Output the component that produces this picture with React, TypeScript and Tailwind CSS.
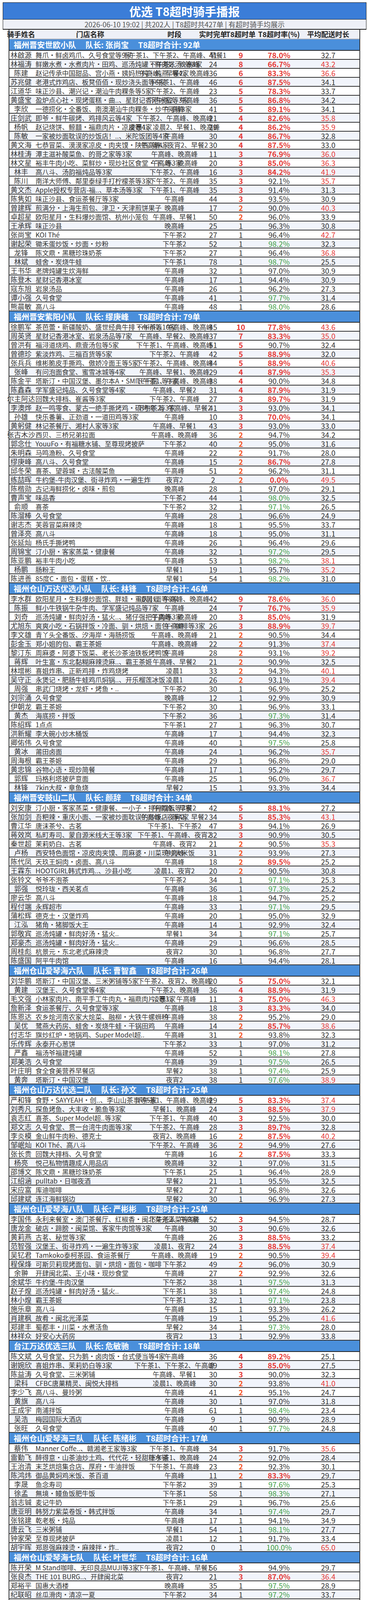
import React from 'react';

type Group = { team: string; leader: string; total: number; rows: string };

// name|store|time|done|late|rate|avg
const groups: Group[] = [
  {
    team: '福州晋安世欧小队', leader: '张尚宝', total: 92, rows: `
林啟源|舞爪·鲜卤鸡爪、久号食堂等9家|下午茶1、下午茶2、午高峰、早餐1|41|9|78.0|32.7
林福涛|鲜嫩水煮·水煮肉片·田鸡、巡汤炖罐·鲜肉好汤..等8家|下午茶2、晚高峰|24|8|66.7|43.2
陈建|赵记传承中国甜品、宫小燕·姨妈热炖·炖燕..等4家|午高峰、早餐2、晚高峰|36|6|83.3|36.6
苏兆健|老港式炸鸡店、板凳佰佰·现炒浇头面等6家|下午茶1、午高峰|46|6|87.5|34.1
江道华|味正沙县、潮兴记·潮汕牛肉粿条等5家|下午茶2、午高峰|23|5|78.3|33.7
黄盛宝|盈炉点心社·现烤蛋糕·曲..、星财记香港冰室等3家|下午茶2、午高峰|36|5|86.8|34.2
李欣|一德捞化·全番饭、南澳潮汕牛肉粿条·炒牛河等3家|午高峰|41|5|89.1|34.1
庄剑武|即爷•鲜牛碳烤、鸡排风云等4家|下午茶2、午高峰、晚高峰|21|4|82.6|35.8
杨帆|赵记烧饼、鲸囍·福鼎肉片·凉皮等4家|凌晨1、凌晨2、早餐1、晚高峰|29|4|86.2|35.9
陈敏|一家被炒面耽误的炒饭店！..、米陀饭团等4家|午高峰|30|4|86.7|32.8
黄文海|七恭冒菜、漠漠家凉皮·肉夹馍·陕西..等4家|午高峰、夜宵2、早餐2|30|4|87.5|33.0
林桂涛|潭主滋补酸菜鱼、的哥之家等3家|午高峰、晚高峰|11|3|76.9|36.0
林文星|裕丰牛肉小吃、菜鲜炒·现炒社区食堂·下..等3家|午高峰、晚高峰|20|3|85.0|36.3
林丰|高八斗、汤韵福炖品等3家|下午茶2、午高峰|16|3|84.2|41.9
陈川|南洋大师傅、鄰里泰绿手打柠檬茶等3家|下午茶2、午高峰|35|3|92.1|35.7
黄文杰|Apple授权专营店-福..、草本汤等3家|下午茶1、午高峰|35|3|91.4|31.3
陈隽如|味正沙县、食运茶餐厅等3家|午高峰|44|3|93.5|30.9
曾建辉|煎满分·上海生煎包、津卫·天津煎饼果子|晚高峰|17|2|90.0|40.3
卓超星|欧阳星月·生料爆炒面馆、杭州小笼包|午高峰、早餐1|50|2|96.0|33.9
王承辉|味正沙县|晚高峰|25|1|96.3|30.8
张尚宝|KOI Thé|下午茶2|27|1|96.4|42.7
谢起荣|锄禾蛋炒饭·炒面·炒粉|下午茶2|52|1|98.2|32.3
龙锋|陈文鼎·黑糖珍珠奶茶|下午茶2|27|1|96.4|36.8
林斌|蛙舍·炭烧牛蛙|下午茶1|78|1|98.7|25.5
王书华|老牌炖罐生炊海鲜|午高峰|32|1|97.0|30.9
陈登木|星财记香港冰室|午高峰|17|1|94.4|30.9
寇东旭|岩泉汤品|午高峰|26|1|96.2|27.3
谭小强|久号食堂|午高峰|41|1|97.7|31.4
熊晨敏|高八斗|午高峰|48|1|98.0|28.6`,
  },
  {
    team: '福州晋安紫阳小队', leader: '缪庚峰', total: 79, rows: `
徐鹏军|茶芭蕾·新疆酸奶、盛世经典牛排·mini等10家|下午茶2、午高峰、晚高峰|45|10|77.8|43.6
周英贤|星财记香港冰室、岩泉汤品等7家|午高峰、早餐2、晚高峰|37|7|83.3|35.0
曾洪有|福浔道烧鸡、鼎壹汤包等5家|下午茶1、午高峰、晚高峰|51|5|90.7|32.4
曾德珍|紫淡炸鸡、三福百货等5家|下午茶2、午高峰|42|5|88.9|32.0
张兵兵|维彬脆皮手撕鸡、傲娇冷面王等5家|下午茶2、午高峰、晚高峰|44|5|88.9|40.6
张峰|有问泡面食堂、蜜雪冰城等4家|午高峰、早餐1、晚高峰|29|4|87.9|35.3
陈金平|塔斯汀·中国汉堡、墨尔本A·SMILE千层..等3家|下午茶1、午高峰、晚高峰|38|4|90.0|34.8
陈鑫森|学军盛记炖品、久号食堂等4家|午高峰、早餐2|31|4|87.9|31.9
尔主阿达|回魏大排档、崔酱等3家|下午茶2、午高峰|27|3|89.7|31.9
李澳烨|赵一鸣零食、蒙古一绝手撕烤鸡·碳烤肉..等3家|下午茶2、午高峰、早餐2|41|3|93.0|34.1
孙雄|快乐番薯、正劲道·一道田鸡等3家|午高峰|10|3|70.0|34.1
黄躬健|林记茶餐厅、湘村人家等3家|午高峰、早餐1|43|3|93.0|33.0
张古木沙|西贝、三桥兄弟拉面|午高峰、晚高峰|36|2|94.7|34.2
郭念仕|YouuFo·有福糖水铺、至尊现烤披萨|下午茶2|40|2|95.0|31.6
朱明森|马鸣渔粉、久号食堂|午高峰|22|2|91.7|28.0
缪庚峰|高八斗、久号食堂|午高峰|15|2|86.7|27.8
邱冬荣|喜茶、望蓉城·古法酸菜鱼|午高峰|51|2|96.2|31.1
练喆晖|牛约堡-牛肉汉堡、街寻炸鸡·一遍生炸|夜宵2|2|2|0.0|49.5
陈楷勋|古记海鲜捞化·卤味·煎包|晚高峰|28|1|97.0|29.1
曹声宝|味品香|下午茶2|44|1|98.0|32.5
俞顺|喜茶|下午茶2|32|1|97.1|26.5
陈溜棒|久号食堂|午高峰|28|1|96.6|24.9
谢志杰|芙蓉冒菜麻辣烫|午高峰|18|1|95.5|33.7
曾泽亮|高八斗|午高峰|18|1|95.0|31.1
张延灿|杨氏手撕烤鸭|午高峰|26|1|96.4|29.6
周锦宝|汀小厨·客家蒸菜·健康餐|午高峰|32|1|97.2|29.5
陈亚鹏|裕丰牛肉小吃|午高峰|53|1|98.2|38.1
杨鹏|肠粉王|早餐1|19|1|95.7|35.2
陈进善|85度C·面包·蛋糕·饮..|早餐1|54|1|98.2|31.0`,
  },
  {
    team: '福州仓山万达优选小队', leader: '林锋', total: 46, rows: `
李水群|欧阳星月·生料爆炒面馆、胖娃·重庆小面等8家|凌晨1、午高峰、晚高峰|42|9|78.6|36.0
陈振|鲜小牛铁锅牛杂牛肉、学军盛记炖品等7家|午高峰|24|7|76.7|35.9
刘奇|巡汤炖罐·鲜肉好汤·猛火..、猪仔强把子肉等3家|午高峰、晚高峰|20|3|85.0|31.9
尤旭东|爽爽小吃·石锅拌饭·冷面、驯·烘焙·面包·咖啡等3家|午高峰|26|3|88.9|39.7
李文雄|青丫头全番饭、汐海岸·海肠捞饭|午高峰、晚高峰|21|2|90.5|34.4
彭金玉|郑小姐的包、霸王茶姬|午高峰、晚高峰|22|2|91.3|37.4
黎汀东|周麻婆·阿婆下饭菜、老长沙茶油铁板烤鸭饭|午高峰|28|2|93.1|39.2
蒋辉|叶生富·东北黏糊麻辣烫麻..、霸王茶姬|午高峰、早餐2|21|2|90.9|32.5
林增彬|喜姐炸串、正新鸡排·炸鸡烧烤|凌晨1|33|2|94.3|40.1
吴守正|永煲记·肥肠牛蛙鸡爪焖锅..、开乐榴莲冰饭|凌晨1|26|2|93.1|39.4
周强|串武门烧烤·龙虾·烤鱼·..|下午茶2|30|1|96.9|25.2
刘宗涌|久号食堂|晚高峰|12|1|92.9|30.9
伊朝龙|霸王茶姬|下午茶2|30|1|96.9|33.1
黄杰|海底捞·拌饭|下午茶2|36|1|97.3|31.4
陈绍辉|1点点|下午茶1|27|1|96.3|30.7
洪新耀|李大碗小炒木桶饭|午高峰|17|1|94.4|32.3
卿佑伟|久号食堂|午高峰|40|1|97.5|25.8
黄冰|莆田卤面|午高峰|24|1|96.2|35.7
周海根|霸王茶姬|午高峰|29|1|96.8|29.0
黄忠锦|谷物心语·现炒简餐|午高峰|17|1|95.2|29.7
郭辉|玛格利塔披萨意面|午高峰|25|1|96.0|36.7
林锋|7kin大叔·章鱼烧|早餐2|15|1|93.3|34.4`,
  },
  {
    team: '福州晋安鼓山二队', leader: '颜辞', total: 34, rows: `
刘安康|汀小厨·客家蒸菜·健康餐、一小子·排骨咸饭等3家|午高峰、早餐2|42|5|88.1|27.2
张加剑|吾粑辣·重庆小面、一家被炒面耽误的炒饭店..等4家|午高峰、夜宵2、早餐2|34|5|85.3|43.1
曹江华|唐沫茶兮、古茗|下午茶1、下午茶2|47|3|94.1|26.9
蒋效岚|私町寿司、蒙自源米线大王等3家|下午茶1、午高峰、夜宵2|32|3|90.9|30.5
秦世超|茉莉奶白、古茗|午高峰、夜宵2|21|2|90.5|35.3
卢杨|西安特色面馆·凉皮肉夹馍、周麻婆·川菜现炒大米饭|午高峰|31|2|93.9|27.3
陈代凤|天玖王焖肉·卤面、高八斗|午高峰|18|2|89.5|25.2
王霖东|HOOTGIRL韩式炸鸡..、沙县小吃|凌晨1、夜宵2|20|2|90.5|30.8
张铃文|爷爷不泡茶|下午茶2|34|1|97.1|25.3
郭强|悦玲珑·西关茗点|午高峰|36|1|97.3|25.2
廖云华|高八斗|午高峰|18|1|94.7|25.2
程付端|永辉超市|午高峰|33|1|97.1|29.5
蒲松辉|德克士·汉堡炸鸡|午高峰|20|1|95.0|32.9
江泓|猪角·猪脚饭大王|午高峰|14|1|92.9|32.4
郭敬宾|巡汤炖罐·鲜肉好汤·猛火..|早餐1|34|1|97.1|25.7
郑豪杰|巡汤炖罐·鲜肉好汤·猛火..|午高峰|29|1|96.6|28.5
周桂彪|杭景元·东北老式麻辣烫|夜宵2|30|1|96.8|27.7
陈盛国|阿平牛肉馆|午高峰|16|1|94.4|28.1`,
  },
  {
    team: '福州仓山爱琴海六队', leader: '曹智鑫', total: 26, rows: `
刘华鹏|塔斯汀·中国汉堡、三米粥铺等5家|下午茶2、夜宵2、晚高峰|20|5|75.0|32.1
黄建|汉堡王、久号食堂等4家|下午茶2、晚高峰|36|4|88.9|31.9
毛文强|小林家肉片、南平手工牛肉丸·福鼎肉片..等3家|凌晨1、午高峰|11|3|75.0|46.3
詹新泽|食运茶餐厅、久号食堂等3家|午高峰|18|3|83.3|34.0
陈恩达|农乡烩河南农家大烩菜、融柳·大铁牛螺蛳粉|午高峰|38|2|95.2|29.0
吴优|鹭燕大药房、蛙舍·炭烧牛蛙·干锅田鸡|午高峰|14|2|85.7|38.6
付志华|旗炒红炉·地锅鸡、Super Model超..|午高峰|31|2|93.8|32.3
乐传辉|永泰开心葱饼|下午茶2|33|1|97.0|31.2
严鑫|福汤爷福建炖罐|午高峰|52|1|98.1|27.8
郑美浩|久号食堂|午高峰|39|1|97.5|26.5
叶庄明|食全食美营养早餐店|早餐2|38|1|97.4|25.9
黄奔|塔斯汀·中国汉堡|夜宵2|38|1|97.6|38.9`,
  },
  {
    team: '福州仓山万达优选二队', leader: '孙文', total: 25, rows: `
严和锋|食野·SAYYEAH·创..、李山山茶事等5家|下午茶1、午高峰、晚高峰|29|5|83.3|37.4
刘秀凡|探鱼烤鱼、大丰收·脆鱼等3家|早餐1、晚高峰|24|3|88.5|37.9
袁志红|喜茶、Super Model超..等3家|下午茶1、午高峰|40|3|92.5|30.0
郑文志|久号食堂、贯一台湾牛肉面等3家|下午茶2、午高峰|28|3|89.7|32.8
李炎模|金山鲜牛肉粉、德克士|夜宵2、晚高峰|16|2|87.5|40.2
邹岷灿|KOI Thé、高八斗|下午茶2、午高峰|36|2|94.9|27.6
张长贵|回魏大排档、久号食堂|午高峰|16|2|87.5|33.3
杨亮|悦己私物情趣成人用品店|晚高峰|32|1|97.0|31.5
邵博文|陈文鼎·黑糖珍珠奶茶|下午茶1|25|1|96.4|28.9
江绍涵|pulltab·日咖夜酒|早餐2|21|1|95.5|32.5
宋应富|库迪咖啡|早餐2|27|1|96.8|32.6
邱建斌|连江海鲜锅边|早餐2|30|1|96.9|27.3`,
  },
  {
    team: '福州仓山爱琴海八队', leader: '严彬彬', total: 25, rows: `
李国伟|永利来餐室·澳门茶餐厅、红椒香·闽北菜光泽菜等3家|下午茶2、午高峰|52|3|94.5|28.7
唐龙金|破店·蹄膀·闽菜馆、客家牛肉馆等3家|午高峰|30|3|90.6|32.6
黄莉燕|古茗、秘觉等3家|午高峰|26|3|88.5|33.2
范智强|汉堡王、街寻炸鸡·一遍生炸等3家|凌晨1、夜宵2|24|3|88.5|37.4
吴钇君|Tamkoko泰柯茶园、食运茶餐厅|午高峰、晚高峰|19|2|90.5|39.4
程保烽|可斯贝莉现烤面包、驯·烘焙·面包·咖啡|下午茶2|49|2|96.0|30.9
余翀|开肆闽北菜、王小味·现炒食堂|午高峰|27|2|92.9|32.6
余斌华|牛约堡-牛肉汉堡|下午茶2|38|1|97.5|31.3
赵子煌|巡汤炖罐·鲜肉好汤·猛火..|下午茶1|38|1|97.4|24.8
林小煌|霸王茶姬|下午茶1|32|1|97.1|23.8
施乐章|高八斗|午高峰|15|1|93.3|26.2
肖建枫|故肴·闽北光泽菜|午高峰|19|1|95.2|41.6
郑建丰|蜀都丰·川菜·水煮活鱼|早餐2|34|1|97.3|28.0
林祥众|好安心大药房|夜宵2|13|1|92.9|33.8`,
  },
  {
    team: '台江万达优选三队', leader: '危敏驰', total: 18, rows: `
陈文斌|久号食堂、只为鹅·卤肉饭·台式便当等4家|午高峰|36|4|89.2|25.1
谢婉欣|喜姐炸串、茉莉奶白等3家|下午茶1、下午茶2、午高峰|19|3|85.0|27.5
陈益涛|久号食堂、三米粥铺|午高峰、早餐1|30|3|90.0|32.3
梁科|CFBC唐菓精灵、闽悦大排档|凌晨1、晚高峰|30|2|93.8|41.0
李少飞|高八斗、曼玲粥|午高峰|41|2|95.1|24.7
黄旗|高八斗|午高峰|30|1|97.0|31.8
王成宇|南浦拌饭|午高峰|61|1|98.4|23.4
吴浩|梅园国际大酒店|午高峰|9|1|90.9|28.9
张旺|久号食堂|午高峰|40|1|97.7|24.8`,
  },
  {
    team: '福州仓山爱琴海三队', leader: '陈绪彬', total: 17, rows: `
蔡伟|Manner Coffe..、赣湘老王家等3家|下午茶1、午高峰|34|3|91.7|35.6
雷勤飞|醉得意·山茶油炒土鸡、代代花·轻甜糖水铺|下午茶1、晚高峰|24|2|92.0|28.4
王治清|末芝烘焙集合店、厚府·牛油拌饭|下午茶1、午高峰|23|2|92.3|30.1
陈鸿炜|御品黄焖鸡米饭、茶百道|午高峰|11|2|83.3|29.7
李晟|鱼念寿司|下午茶2|39|1|97.6|25.3
徐孟|無境·鳗鱼饭肥牛饭|下午茶1|58|1|98.3|27.1
翁志铖|麦记牛奶|下午茶1|29|1|96.7|25.6
唐亚明|韩努力紫菜卷饭·韩式拌饭|午高峰|34|1|97.4|29.7
张铭建|乾老板·炖品|午高峰|17|1|94.1|34.9
唐云飞|三米粥铺|早餐1|54|1|98.1|27.7
钟家荣|至尊现烤披萨|凌晨1|12|1|91.7|33.4
胡宇晖|郑恩强麻辣烫·麻辣拌·炸..|夜宵2|0|1|100.0|65.0`,
  },
  {
    team: '福州仓山爱琴海七队', leader: '叶世华', total: 16, rows: `
陈开荣|M Stand咖啡、无印良品MUJI等3家|下午茶1、午高峰、早餐1|56|3|94.9|29.7
张良杰|THE 101 BURG..、开肆闽北菜|夜宵2|21|3|87.0|36.4
郑裕平|国惠大酒楼|晚高峰|35|1|97.5|28.9
纪联昭|丝瓜滑肉·清凉一夏|下午茶2|34|1|97.2|33.7
郑鑫|喜茶|午高峰|27|1|96.8|27.2
何文涛|高八斗|午高峰|31|1|97.1|27.0
陈浩然|赵一鸣零食|午高峰|35|1|97.3|25.6
叶佳浩|莆田餐厅|午高峰|23|1|96.0|26.5
林先惠|重庆麻辣烫·麻辣拌|午高峰|36|1|97.2|28.2
陈鹏|李山山茶事|午高峰|38|1|97.6|28.4
张辉|永和大王·现磨豆浆日日鲜..|早餐2|21|1|95.7|28.6
吴才乾|杭州小笼包·炒粉·粥·炖..|夜宵2|18|1|94.7|36.0`,
  },
  {
    team: '福州城门优选小队', leader: '王军', total: 16, rows: `
薛开伟|杭景元·东北老式麻辣烫·..、紫淡炸鸡等3家|夜宵2|1|3|-200.0|48.3
陈亮|橘子饭堂、三米粥铺|午高峰|17|2|89.5|32.3
林旺|曹氏鸭脖·麻辣烫、汤岩泉·炖罐·猛火现炒|夜宵2|17|2|88.9|33.9
韩程彬|麻鸡王·麻椒鸡|下午茶2|24|1|95.8|25.0
黄明权|古茗|下午茶1|24|1|96.3|27.2
刘延佳|很有料叫花鸡|下午茶1|34|1|97.2|23.2
李世接|1点点|午高峰|19|1|95.0|24.7
王军|匠一锅·牛骨锅|午高峰|20|1|95.2|27.6
王锦超|安肉米·和牛汉堡肉盖饭|午高峰|33|1|97.0|25.6
董刚|海王星辰|早餐1|20|1|95.0|27.8
陈明辉|海王星辰·隐形眼镜|早餐1|26|1|96.3|26.4
陈兴国|永辉线上超市|早餐1|23|1|95.8|24.3`,
  },
  {
    team: '福州台江万达优选小队', leader: '陆郑章', total: 13, rows: `
赵庆磊|Apple授权专营店-金..、马叔的店·新疆福鼎肉片等3家|早餐1、午高峰、晚高峰|37|3|92.1|27.3
黄信强|久号食堂、重庆小面|午高峰|24|2|92.9|28.4
陆郑章|食运茶餐厅、霸王茶姬|午高峰|21|2|90.5|30.4
高学基|高八斗|午高峰|19|2|89.5|24.1
陈俊龙|有益家粉干卤杂|午高峰|21|1|95.7|27.4
刘昌腾|Super Model超..|午高峰|38|1|97.4|28.7
程相财|醉得意·得意送到家|午高峰|45|1|97.9|22.6
江家勤|食运茶餐厅|午高峰|26|1|96.4|27.5`,
  },
  {
    team: '福州仓山爱琴海五队', leader: '赖剑锋', total: 11, rows: `
吴建津|刘文祥麻辣烫、永和大王·现磨豆浆日日鲜..等3家|午高峰|35|3|91.9|29.4
王江|曹氏鸭脖·辣卤麻辣烫、六意鲜超市|下午茶2、早餐2|34|2|94.4|32.3
杨福川|春物叙事韩式炸鸡、望蓉城·古法酸菜鱼|午高峰|28|2|93.8|35.1
王礼坤|掌门土豆·粉面·煎饼·炸..|晚高峰|27|1|96.6|26.6
陈灿辉|朴大叔拌饭|午高峰|38|1|97.4|27.4
刘新宇|汀小厨·客家蒸菜·健康餐|午高峰|5|1|83.3|28.7
陈忠明|林家黄焖鸡米饭•绝无预制..|午高峰|23|1|95.8|31.2`,
  },
  {
    team: '福州城门优选二队', leader: '欧树峰', total: 9, rows: `
李晰|蒙自源米线、小厨东北私房菜等3家|午高峰|7|3|57.1|41.5
李锦华|正劲道·一道田鸡、玛格利塔披萨意面|午高峰、夜宵2|12|2|86.7|28.6
陈明辉|豪德亨牛排·轻食·沙拉|晚高峰|14|1|92.9|29.7
熊怀界|福龙腾食堂·新鲜现炒|晚高峰|14|1|93.8|33.5
陈潇|汤岩泉·炖罐·猛火现炒|午高峰|20|1|95.0|30.8
许文涛|曹氏鸭脖·麻辣烫|午高峰|26|1|96.3|27.2`,
  },
];

const lateClass = (n: number) =>
  n >= 3 ? 'text-[#e53935] font-bold' : n === 2 ? 'text-[#f4511e] font-bold' : 'text-[#333]';

const rateClass = (v: number) =>
  v < 90 ? 'text-[#e53935] font-bold' : v > 97 ? 'text-[#43a047]' : 'text-[#333]';

const avgClass = (v: number) => (v >= 35 ? 'text-[#e53935]' : 'text-[#333]');

// fixed row: 21px content + 2px bottom rule
const RiderRow = ({ line, index }: { line: string; index: number }) => {
  const [name, store, time, done, late, rate, avg] = line.split('|');
  const bg = index % 2 ? 'bg-[#f1f4fb]' : 'bg-white';
  return (
    <div className={`flex h-[23px] items-center border-b-2 border-[#333] whitespace-nowrap ${bg}`}>
      <div className="flex h-[21px] w-[60px] shrink-0 items-center justify-center text-[18px] leading-[21px] text-[#333]">{name}</div>
      <div className="h-[21px] w-[294px] shrink-0 pl-[7px] text-[17px] leading-[21px] text-[#333]">{store}</div>
      <div className="flex h-[21px] w-[138px] shrink-0 items-center justify-center text-[17px] leading-[21px] text-[#333]">{time}</div>
      <div className="flex h-[21px] w-[60px] shrink-0 items-center justify-center text-[19px] leading-[21px] text-[#333]">{done}</div>
      <div className={`flex h-[21px] w-[82px] shrink-0 items-center justify-center text-[19px] leading-[21px] ${lateClass(Number(late))}`}>{late}</div>
      <div className={`flex h-[21px] w-[114px] shrink-0 items-center justify-center text-[19px] leading-[21px] ${rateClass(parseFloat(rate))}`}>{rate}%</div>
      <div className={`flex h-[21px] w-[138px] shrink-0 items-center justify-center text-[19px] leading-[21px] ${avgClass(parseFloat(avg))}`}>{avg}</div>
    </div>
  );
};

const TeamHeader = ({ group }: { group: Group }) => (
  <div className="flex h-[29px] items-center gap-[24px] border-b-2 border-[#222] bg-[#4a8fdb] pl-[11px] text-[20px] font-bold leading-[27px] text-white whitespace-nowrap">
    <span>{group.team}</span>
    <span>队长: {group.leader}</span>
    <span>T8超时合计: {group.total}单</span>
  </div>
);

const App = () => {
  return (
    <div className="bg-white pt-[6px] font-['Noto_Sans_CJK_SC','Noto_Sans',sans-serif]">
      {/* Title block */}
      <div className="ml-[7px] w-[932px] border-x border-t border-b-2 border-[#1a1a1a]">
        <div className="flex h-[42px] items-center justify-center bg-[#3b7dd8] text-[30px] font-bold leading-[42px] text-white">
          优选 T8超时骑手播报
        </div>
        <div className="flex h-[25px] items-center justify-center border-t border-[#1a1a1a] bg-[#eef0f7] text-[18px] leading-[24px] text-[#555]">
          2026-06-10 19:02 | 共202人 | T8超时共427单 | 有超时骑手均展示
        </div>
      </div>

      {/* Table */}
      <div className="ml-[22px] w-[901px] border-x-2 border-[#333]">
        <div className="flex h-[25px] items-center border-b-2 border-[#a3a8b4] bg-[#eef0f7] text-[18px] font-bold leading-[23px] text-[#222] whitespace-nowrap">
          <div className="flex w-[60px] shrink-0 justify-center">骑手姓名</div>
          <div className="flex w-[294px] shrink-0 justify-center">门店名称</div>
          <div className="flex w-[138px] shrink-0 justify-center">时段</div>
          <div className="flex w-[60px] shrink-0 justify-center">实时完单</div>
          <div className="flex w-[82px] shrink-0 justify-center">T8超时单</div>
          <div className="flex w-[114px] shrink-0 justify-center">T8超时率(%)</div>
          <div className="flex w-[138px] shrink-0 justify-center">平均配送时长</div>
        </div>
        {groups.map((group) => (
          <section key={group.team}>
            <TeamHeader group={group} />
            {group.rows
              .trim()
              .split('\n')
              .map((line, i) => (
                <RiderRow key={`${group.team}-${i}`} line={line} index={i} />
              ))}
          </section>
        ))}
      </div>
      <div className="h-[40px]" />
    </div>
  );
};

export default App;
